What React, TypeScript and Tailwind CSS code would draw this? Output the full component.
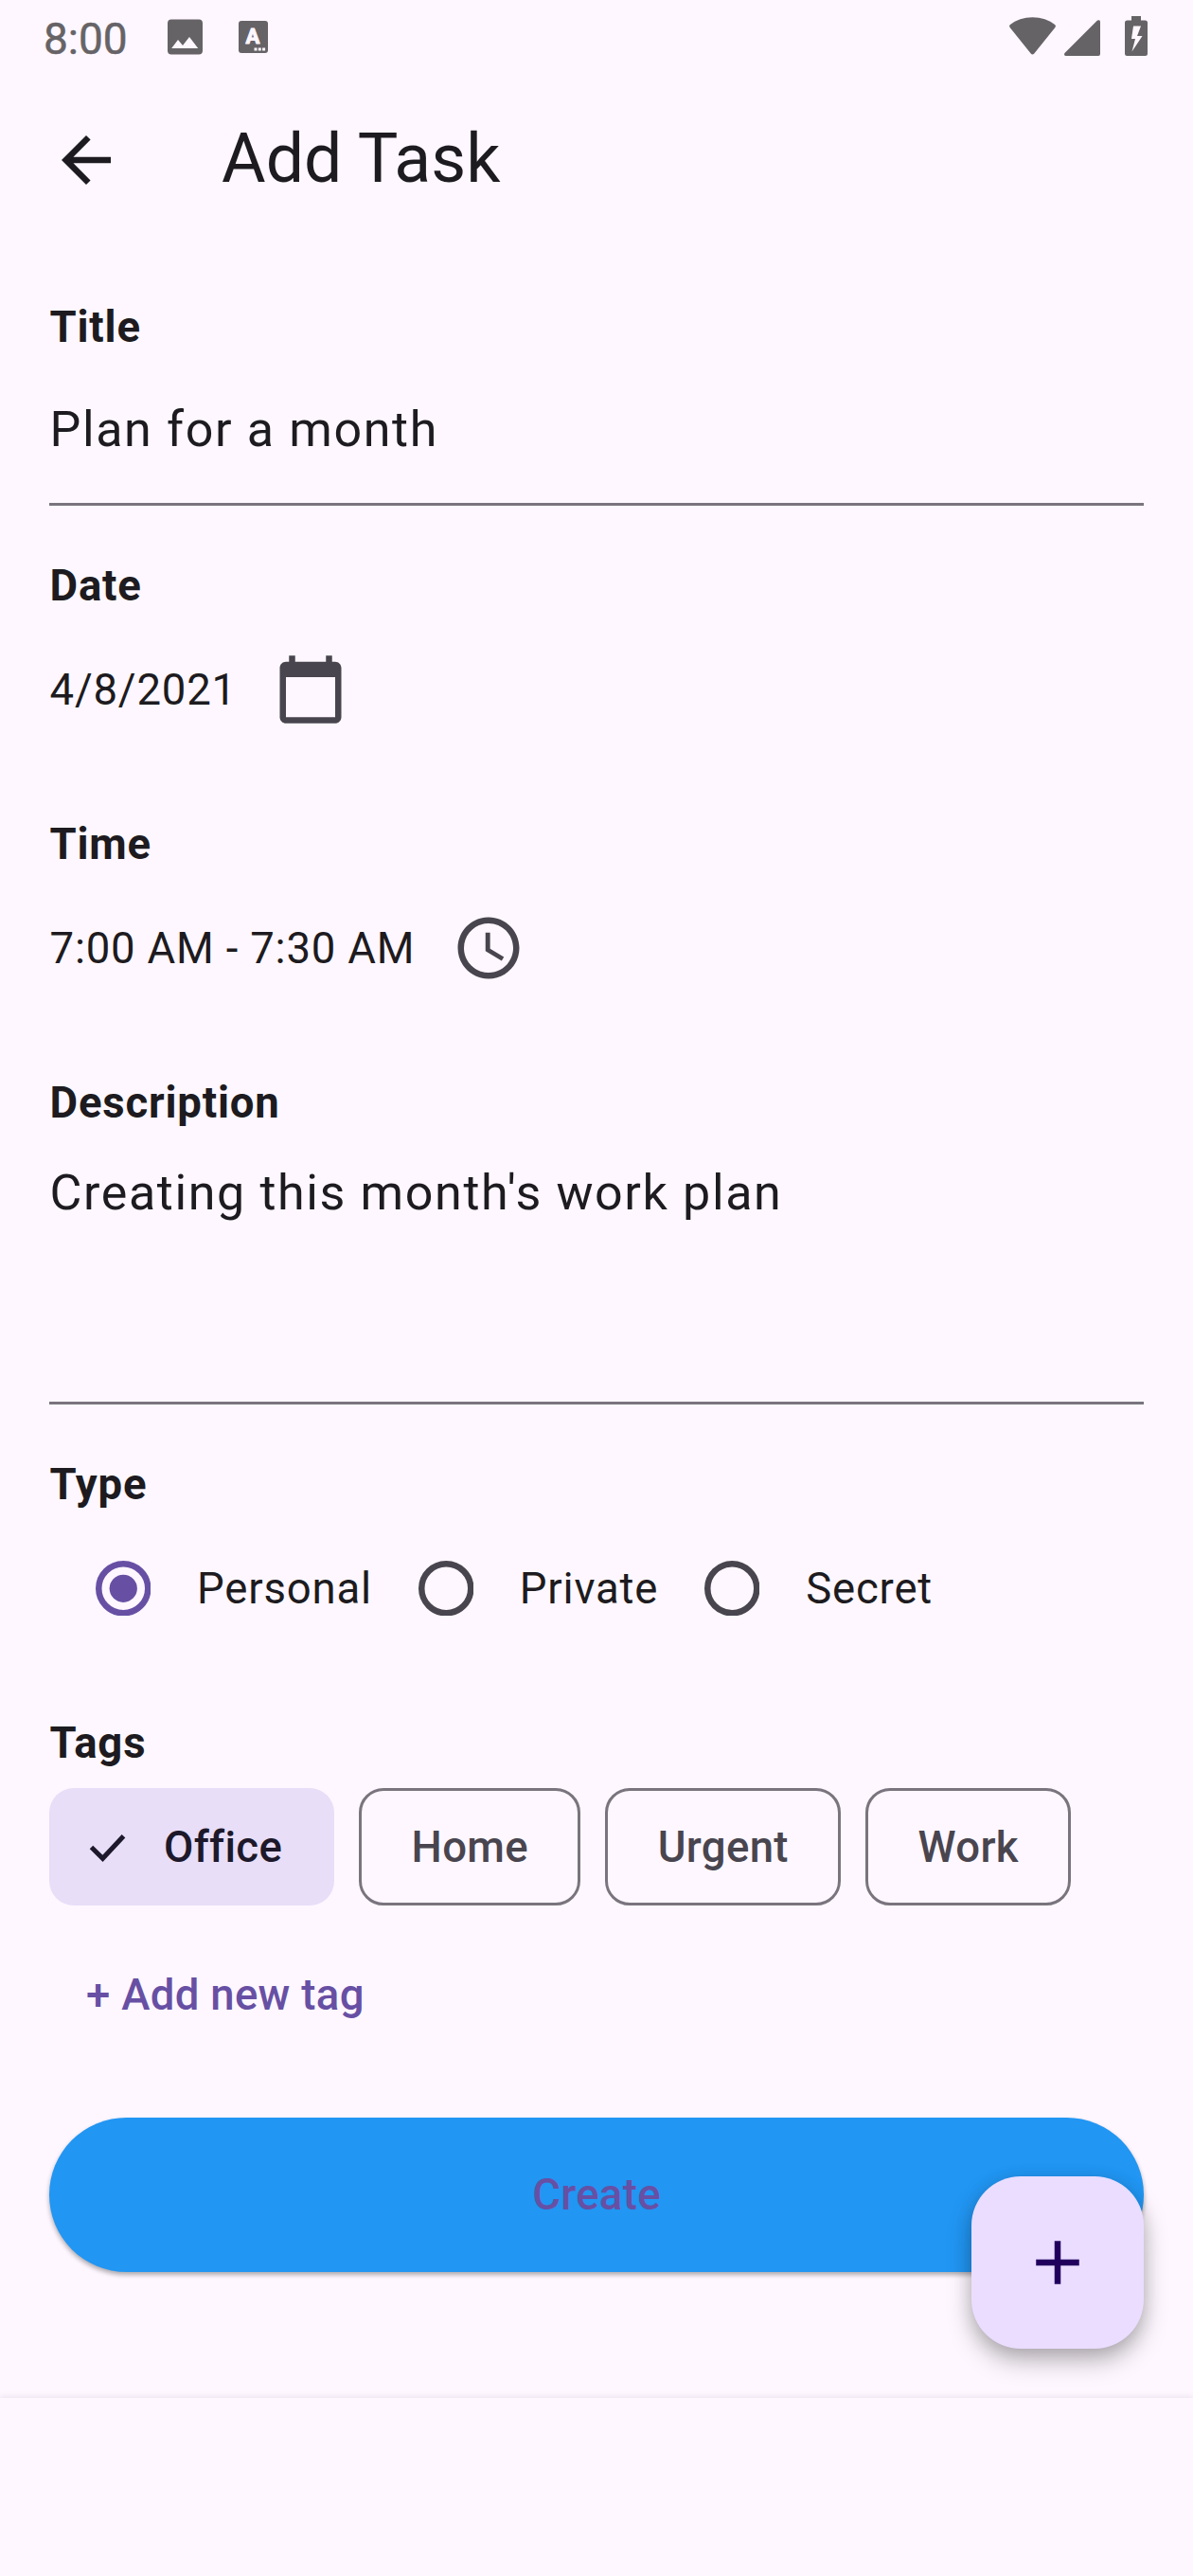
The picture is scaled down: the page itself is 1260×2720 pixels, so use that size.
import type { ReactNode } from "react";

const body = "text-[45.5px] leading-[65px] tracking-[0.8125px]";
const labelLarge = "text-[45.5px] leading-[65px] font-medium tracking-[0.325px]";

function StatusBar() {
  return (
    <div className="flex h-[79px] items-start text-[#666367]">
      <span className="ml-[46px] mt-[14px] w-[91px] whitespace-nowrap text-[46px] leading-[54px] [-webkit-text-stroke:0.5px_#666367]">8:00</span>
      <svg className="ml-[40px] mt-[20px] h-[38px] w-[37px]" viewBox="0 0 37 38" fill="currentColor">
        <path
          fillRule="evenodd"
          d="M4 .4h29a4 4 0 0 1 4 4v29.200a4 4 0 0 1-4 4H4a4 4 0 0 1-4-4V4.400a4 4 0 0 1 4-4zM4.200 31h28L23 19l-7 9-5-6z"
        />
      </svg>
      <svg className="ml-[38px] mt-[21px] h-[36px] w-[31px]" viewBox="0 0 31 36">
        <rect x="0" y="1" width="31" height="34" rx="3" fill="currentColor" />
        <text
          x="15"
          y="25"
          textAnchor="middle"
          fontFamily="Roboto, sans-serif"
          fontSize="22"
          fontWeight="700"
          fill="#fef7ff"
          stroke="#fef7ff"
          strokeWidth="1"
          strokeLinejoin="round"
        >
          A
        </text>
        <g fill="#fef7ff">
          <rect x="16.500" y="29.500" width="3" height="3" />
          <rect x="20.800" y="29.500" width="3" height="3" />
          <rect x="25.100" y="29.500" width="3" height="3" />
        </g>
      </svg>
      <svg className="ml-auto mt-[18px] h-[40px] w-[49px]" viewBox="0 0 49 40" fill="currentColor">
        <path d="M.6 8.200C7 3 15.500.2 24.500.2S42 3 48.400 8.200q1 1.400 0 2.700L26.300 38.600q-1.800 1.900-3.600 0L.6 10.900q-1-1.300 0-2.700z" />
      </svg>
      <svg className="ml-[9px] mt-[21px] h-[38px] w-[38px]" viewBox="0 0 38 38" fill="currentColor">
        <path d="M35 .6q3-1.400 3 1.400v34q0 2-2 2H1.500q-2.300-.8-1-3z" />
      </svg>
      <svg className="ml-[26px] mr-[48px] mt-[17px] h-[42px] w-[24px]" viewBox="0 0 24 42" fill="currentColor">
        <path
          fillRule="evenodd"
          d="M7 0h10v4.500h4.500A2.500 2.500 0 0 1 24 7v32.500a2.500 2.500 0 0 1-2.500 2.500h-19A2.500 2.500 0 0 1 0 39.500V7a2.500 2.500 0 0 1 2.500-2.500H7zM9 10.500L7 24h4L7.500 37.500 18.500 21h-5.500l4-10.500z"
        />
      </svg>
    </div>
  );
}

function MaterialIcon({ d }: { d: string }) {
  return (
    <svg className="size-[78px]" viewBox="0 0 24 24" fill="currentColor">
      <path d={d} />
    </svg>
  );
}

function Section({ label, children }: { label: string; children: ReactNode }) {
  return (
    <section className="mb-[52px]">
      <h2 className={`${body} pl-[0.5px] font-bold`}>{label}</h2>
      {children}
    </section>
  );
}

function PickerRow({ text, icon }: { text: string; icon: string }) {
  return (
    <div className={`flex h-[156px] items-center pb-[2px] pl-[0.5px] ${body}`}>
      <span>{text}</span>
      <button className="p-[39px] text-[#49454f]">
        <MaterialIcon d={icon} />
      </button>
    </div>
  );
}

function Radio({ label, checked = false }: { label: string; checked?: boolean }) {
  return (
    <label className="flex items-center">
      <span className="flex size-[156px] items-center justify-center">
        <svg
          className={checked ? "size-[58.5px] text-[#6750a4]" : "size-[58.5px] text-[#49454f]"}
          viewBox="0 0 18 18"
        >
          <circle cx="9" cy="9" r="8" fill="none" stroke="currentColor" strokeWidth="2" />
          {checked && <circle cx="9" cy="9" r="4.5" fill="currentColor" />}
        </svg>
      </span>
      {label}
    </label>
  );
}

function Chip({ label }: { label: string }) {
  return (
    <span className={`flex h-[124px] items-center rounded-[26px] border-[3.25px] border-[#79747e] px-[52.4px] text-[#49454f] ${labelLarge}`}>
      {label}
    </span>
  );
}

export default function App() {
  return (
    <div className="relative flex h-[2720px] w-[1260px] flex-col overflow-hidden bg-[#fef7ff] font-['Roboto',sans-serif] text-[#1d1b20]">
      <StatusBar />
      <header className="flex h-[182px] items-center pb-[2px]">
        <button className="flex w-[182px] justify-center">
          <MaterialIcon d="M20 11H7.830l5.590-5.590L12 4l-8 8 8 8 1.410-1.410L7.830 13H20v-2z" />
        </button>
        <h1 className="ml-[52px] pb-[4px] text-[71.5px] leading-[91px]">Add Task</h1>
      </header>

      <main className="flex h-[2271px] flex-col px-[52px] pt-[52px]">
        <Section label="Title">
          <div className="h-[156px] border-b-[3.25px] border-[#79747e] pl-[0.5px] pt-[37px] text-[52px] leading-[78px] tracking-[1.625px]">
            Plan for a month
          </div>
        </Section>
        <Section label="Date">
          <PickerRow
            text="4/8/2021"
            icon="M20 3h-1V1h-2v2H7V1H5v2H4c-1.100 0-2 .9-2 2v16c0 1.100.9 2 2 2h16c1.100 0 2-.9 2-2V5c0-1.100-.9-2-2-2zm0 18H4V8h16v13z"
          />
        </Section>
        <Section label="Time">
          <PickerRow
            text="7:00 AM - 7:30 AM"
            icon="M11.990 2C6.470 2 2 6.480 2 12s4.470 10 9.990 10C17.520 22 22 17.520 22 12S17.520 2 11.990 2zM12 20c-4.420 0-8-3.580-8-8s3.580-8 8-8 8 3.580 8 8-3.580 8-8 8zm.5-13H11v6l5.250 3.150.75-1.230-4.500-2.670z"
          />
        </Section>
        <Section label="Description">
          <div className="h-[286px] border-b-[3.25px] border-[#79747e] pl-[0.5px] pt-[24px] text-[52px] leading-[78px] tracking-[1.625px]">
            Creating this month's work plan
          </div>
        </Section>
        <Section label="Type">
          <div className={`flex h-[156px] items-center pb-[2px] ${body}`}>
            <Radio label="Personal" checked />
            <Radio label="Private" />
            <Radio label="Secret" />
          </div>
        </Section>
        <h2 className={`${body} pl-[0.5px] font-bold`}>Tags</h2>
        <div className="mt-[15px] flex gap-[26px]">
          <span className={`flex h-[124px] items-center rounded-[26px] bg-[#e8def8] pl-[36px] pr-[55px] text-[#1d192b] ${labelLarge}`}>
            <svg className="mr-[33px] h-[52px] w-[52px]" viewBox="0 0 52 52" fill="none" stroke="currentColor" strokeWidth="5">
              <path d="M8.500 26.500L20.500 38.300 42.500 14.800" />
            </svg>
            Office
          </span>
          <Chip label="Home" />
          <Chip label="Urgent" />
          <Chip label="Work" />
        </div>
        <button className={`mt-[16px] flex h-[156px] items-center self-start px-[39px] text-[#6750a4] ${labelLarge}`}>
          + Add new tag
        </button>
        <button
          className={`mt-[52px] h-[162.5px] shrink-0 rounded-full bg-[#2196f3] text-center text-[#6750a4] shadow-[0_3px_5px_rgba(0,0,0,0.32)] ${labelLarge}`}
        >
          Create
        </button>
      </main>
      <footer className="h-[188px] bg-[#fef7ff] shadow-[0_-1px_6px_rgba(60,30,70,0.10)]" />

      <button className="absolute bottom-[240.5px] right-[52px] flex size-[182px] items-center justify-center rounded-[52px] bg-[#eaddff] text-[#21005d] shadow-[0_13px_26px_rgba(0,0,0,0.26),0_4px_18px_rgba(0,0,0,0.12)]">
        <MaterialIcon d="M19 13h-6v6h-2v-6H5v-2h6V5h2v6h6v2z" />
      </button>
    </div>
  );
}
